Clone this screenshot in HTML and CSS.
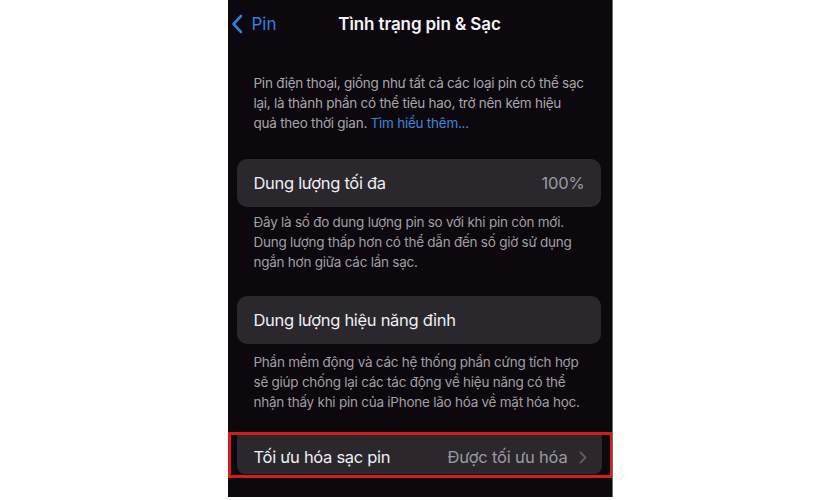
FILE: index.html
```html
<!DOCTYPE html>
<html lang="vi">
<head>
<meta charset="utf-8">
<link rel="stylesheet" href="styles.css">
</head>
<body>
<div class="page">
  <div class="phone">
    <div class="nav">
      <div class="back">
        <svg class="back-icon" width="12" height="20" viewBox="0 0 12 20"><path d="M10 2 L2.5 10 L10 18" fill="none" stroke="#2f7fe0" stroke-width="2.6" stroke-linecap="round" stroke-linejoin="round"/></svg>
        <span>Pin</span>
      </div>
      <div class="title">Tình trạng pin &amp; Sạc</div>
      <div></div>
    </div>

    <p class="intro">Pin điện thoại, giống như tất cả các loại pin có thể sạc<br>lại, là thành phần có thể tiêu hao, trở nên kém hiệu<br>quả theo thời gian. <span class="link">Tìm hiểu thêm...</span></p>

    <div class="card card-first">
      <span class="label">Dung lượng tối đa</span>
      <span class="value">100%</span>
    </div>
    <p class="note note-first">Đây là số đo dung lượng pin so với khi pin còn mới.<br>Dung lượng thấp hơn có thể dẫn đến số giờ sử dụng<br>ngắn hơn giữa các lần sạc.</p>

    <div class="card card-second">
      <span class="label">Dung lượng hiệu năng đỉnh</span>
    </div>
    <p class="note note-second">Phần mềm động và các hệ thống phần cứng tích hợp<br>sẽ giúp chống lại các tác động về hiệu năng có thể<br>nhận thấy khi pin của iPhone lão hóa về mặt hóa học.</p>

    <div class="highlight">
      <div class="card card-third">
        <span class="label">Tối ưu hóa sạc pin</span>
        <span class="value value-link">Được tối ưu hóa
          <svg class="chev" width="8" height="13" viewBox="0 0 8 13"><path d="M1.5 1.5 L6.5 6.5 L1.5 11.5" fill="none" stroke="#5f5d64" stroke-width="1.8" stroke-linecap="round" stroke-linejoin="round"/></svg>
        </span>
      </div>
    </div>
  </div>
</div>
</body>
</html>
```

FILE: styles.css
```css
html, body {
  margin: 0;
  padding: 0;
  background: #ffffff;
}

body {
  font-family: Inter, "Noto Sans", sans-serif;
}

.page {
  display: flex;
  justify-content: center;
  height: 500px;
}

.phone {
  box-sizing: border-box;
  width: 385px;
  height: 497px;
  background: #0c080d;
  padding: 0 11px 0 9px;
  overflow: hidden;
  border-right: 1px solid #6b6b6b;
}

.nav {
  display: grid;
  grid-template-columns: 1fr auto 1fr;
  align-items: center;
  height: 48px;
  margin: 0 -11px 0 -9px;
}

.back {
  display: flex;
  align-items: center;
  gap: 9px;
  padding-left: 3px;
  color: #2f7fe0;
  font-size: 17px;
}

.back-icon {
  display: block;
}

.title {
  color: #f4f4f6;
  font-size: 17px;
  font-weight: 600;
  letter-spacing: -0.1px;
}

.intro {
  margin: 25px 0 0;
  padding-left: 17px;
  font-size: 13.5px;
  letter-spacing: -0.25px;
  line-height: 20px;
  color: #a8a6ac;
  white-space: nowrap;
}

.link {
  color: #3d86dc;
}

.card {
  box-sizing: border-box;
  display: flex;
  align-items: center;
  justify-content: space-between;
  height: 48px;
  padding: 0 16px 0 17px;
  background: #2a282d;
  border-radius: 10px;
}

.card-first {
  margin-top: 26px;
}

.card-second {
  margin-top: 24px;
}

.label {
  color: #f0eff2;
  font-size: 16.5px;
  letter-spacing: -0.3px;
}

.value {
  color: #9c9aa0;
  font-size: 16.5px;
  letter-spacing: -0.2px;
}

.note {
  margin: 5px 0 0;
  padding-left: 17px;
  font-size: 13.5px;
  letter-spacing: -0.25px;
  line-height: 20px;
  color: #a19fa5;
  white-space: nowrap;
}

.note-second {
  margin-top: 8px;
}

.highlight {
  margin: 20px -12px 0 -9px;
  border: 3px solid #d41c1c;
  padding: 0 8px 1px 6px;
}

.card-third {
  height: 39px;
  padding-top: 5px;
  padding-right: 15px;
  border-radius: 0 0 8px 8px;
}

.value-link {
  display: flex;
  align-items: center;
  gap: 11px;
}

.chev {
  display: block;
}
```
